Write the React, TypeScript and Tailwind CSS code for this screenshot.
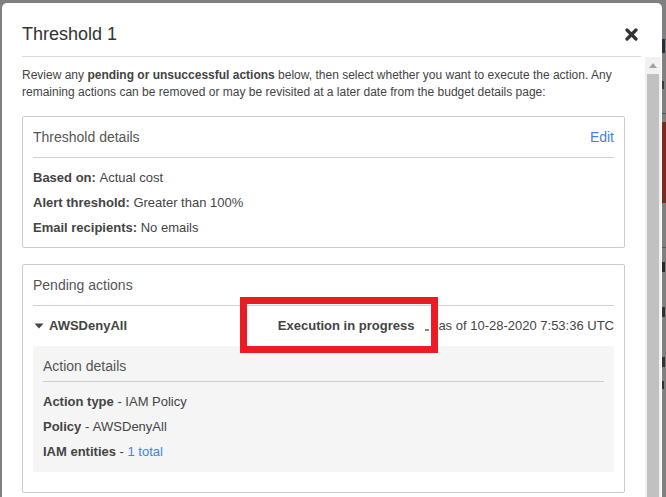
import React from 'react';

const font = { fontFamily: '"Liberation Sans", Arial, sans-serif' };

const DetailRow: React.FC<{ label: string; sep?: string; children: React.ReactNode }> = ({ label, sep = ':', children }) => (
  <div className="h-[25px] flex items-center text-[13px] text-[#444]">
    <span className="font-bold">{sep === ':' ? `${label}:` : label}</span>
    <span className="whitespace-pre">{sep === ':' ? ' ' : ' - '}</span>
    {children}
  </div>
);

const CloseIcon = () => (
  <svg width="13" height="13" viewBox="0 0 13 13">
    <path d="M2 2 L11 11 M11 2 L2 11" stroke="#333" strokeWidth="3.2" strokeLinecap="round" />
  </svg>
);

const Scrollbar = () => (
  <div className="w-[16px] bg-[#f1f1f1] flex flex-col shrink-0">
    <div className="h-[17px] flex items-center justify-center">
      <svg width="8" height="5" viewBox="0 0 8 5">
        <path d="M0 5 L4 0 L8 5 Z" fill="#a3a3a3" />
      </svg>
    </div>
    <div className="flex-1 mx-[2px] bg-[#c1c1c1]" />
  </div>
);

// page behind the overlay, only a sliver shows on the right
const Backdrop = () => (
  <div className="flex-1 flex flex-col pt-[36px]">
    <div className="h-[14px] w-[3px] bg-[#27303f]" />
    <div className="h-[28px]" />
    <div className="h-[8px] w-[2px] bg-[#3a3a3a]" />
    <div className="h-[24px]" />
    <div className="h-[1px] bg-[#555]" />
    <div className="h-[8px]" />
    <div className="h-[81px] bg-[#7a2a1f]" />
    <div className="h-[44px]" />
    <div className="h-[1px] bg-[#5a5a5a]" />
    <div className="h-[14px]" />
    <div className="h-[10px] w-[3px] bg-[#2b2b2b]" />
    <div className="h-[35px]" />
    <div className="h-[10px] w-[3px] bg-[#333]" />
    <div className="h-[40px]" />
    <div className="h-[10px] w-[3px] bg-[#333]" />
    <div className="h-[14px]" />
    <div className="h-[8px] w-[2px] bg-[#333]" />
  </div>
);

export default function App() {
  return (
    <div style={font} className="w-[666px] h-[497px] bg-[#808080] overflow-hidden flex pt-[3px] pl-[2px]">
      <div className="w-[660px] bg-white rounded-t-[5px] flex flex-col shrink-0 relative">
        <div className="ml-[20px] mr-[21px] h-[54px] border-b border-[#d9d9d9] flex items-center justify-between pt-[9px]">
          <span className="text-[18px] text-[#333]">Threshold 1</span>
          <span className="mr-[3px]">
            <CloseIcon />
          </span>
        </div>

        <div className="flex flex-1 min-h-0">
          <div className="flex-1 pl-[20px] pr-[20px] pt-[10px]">
            <p className="text-[12px] leading-[17px] text-[#444] whitespace-nowrap">
              Review any <b>pending or unsuccessful actions</b> below, then select whether you want to execute the action. Any
              <br />
              remaining actions can be removed or may be revisited at a later date from the budget details page:
            </p>

            <div className="mt-[15px] border border-[#ccc] rounded-[2px] px-[10px] pb-[7px]">
              <div className="h-[41px] border-b border-[#d0d0d0] flex items-center justify-between">
                <span className="text-[14px] text-[#555]">Threshold details</span>
                <span className="text-[14px] text-[#3f84e5]">Edit</span>
              </div>
              <div className="pt-[7px]">
                <DetailRow label="Based on">Actual cost</DetailRow>
                <DetailRow label="Alert threshold">Greater than 100%</DetailRow>
                <DetailRow label="Email recipients">No emails</DetailRow>
              </div>
            </div>

            <div className="mt-[16px] border border-[#ccc] rounded-[2px] px-[10px] pb-[20px]">
              <div className="h-[41px] border-b border-[#d0d0d0] flex items-center">
                <span className="text-[14px] text-[#555]">Pending actions</span>
              </div>
              <div className="h-[40px] flex items-center justify-between text-[13px] text-[#444]">
                <div className="flex items-center">
                  <svg width="10" height="6" viewBox="0 0 10 6" className="ml-[1px] mr-[5px]">
                    <path d="M0.5 0.5 L9.5 0.5 L5 5.5 Z" fill="#444" />
                  </svg>
                  <span className="font-bold">AWSDenyAll</span>
                </div>
                <div className="flex items-center">
                  <span className="font-bold">Execution in progress</span>
                  <span className="ml-[11px] mt-[7px] w-[4px] h-[2px] bg-[#888]" />
                  <span className="ml-[9px]">as of 10-28-2020 7:53:36 UTC</span>
                </div>
              </div>
              <div className="bg-[#f5f5f5] rounded-[2px] px-[10px] pb-[8px]">
                <div className="pt-[12px] pb-[7px] leading-[16px] border-b border-[#cfcfcf] text-[14px] text-[#555]">
                  Action details
                </div>
                <div className="pt-[7px]">
                  <DetailRow label="Action type" sep="-">IAM Policy</DetailRow>
                  <DetailRow label="Policy" sep="-">AWSDenyAll</DetailRow>
                  <DetailRow label="IAM entities" sep="-">
                    <span className="text-[#3f84e5]">1 total</span>
                  </DetailRow>
                </div>
              </div>
            </div>
          </div>
          <Scrollbar />
          <div className="w-[1px]" />
        </div>

        {/* annotation box over the status */}
        <div className="absolute left-[238px] top-[294px] w-[198px] h-[56px] border-[7px] border-[#ed1c24]" />
      </div>
      <Backdrop />
    </div>
  );
}
